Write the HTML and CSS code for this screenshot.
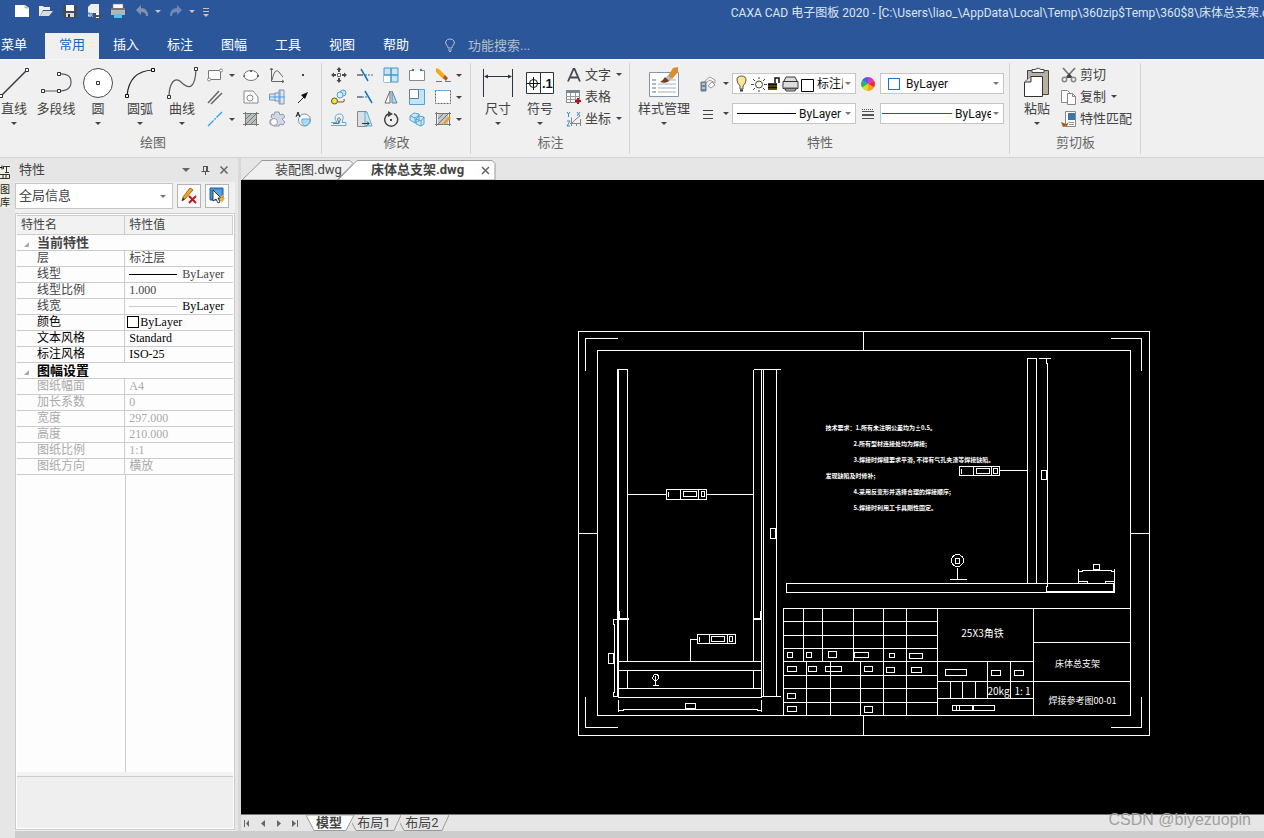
FILE: index.html
```html
<!DOCTYPE html>
<html lang="zh-CN">
<head>
<meta charset="utf-8">
<title>CAXA CAD 电子图板 2020</title>
<link rel="stylesheet" href="styles.css">
</head>
<body>
<header class="titlebar">
  <div class="title-row">
    <div class="qat">
      <button class="qat-btn" aria-label="新建"><svg viewBox="0 0 16 16"><path d="M1 2h10l4 3v9H1z" fill="#fff"/><path d="M11 2v3h4" fill="#ccd" stroke="#999" stroke-width=".6"/></svg></button>
      <button class="qat-btn" aria-label="打开"><svg viewBox="0 0 16 16"><path d="M1 3h4l1 1h6v3H5l-3 6H1z" fill="#eee"/><path d="M5 8h10l-4 5H2z" fill="#ddd"/></svg></button>
      <button class="qat-btn" aria-label="保存"><svg viewBox="0 0 16 16"><path d="M1 2h14v13H2l-1-1z" fill="#444b57"/><path d="M4 2h8v6H4z" fill="#fff"/><path d="M4 10h8v4H4z" fill="#ddd"/><path d="M6 11h2v3H6z" fill="#333"/></svg></button>
      <button class="qat-btn" aria-label="另存为"><svg viewBox="0 0 16 16"><path d="M5 1h8v9H2V4z" fill="#eee"/><path d="M2 12h5" stroke="#eee" stroke-width="3"/><path d="M3 9v3h3M5 10l2 2-2 2" stroke="#2786c9" fill="none"/><path d="M8 10h7v6H8z" fill="#4b505a"/><path d="M10 10h3v2h-3zM10 14h3v1h-3z" fill="#fff"/></svg></button>
      <button class="qat-btn" aria-label="打印"><svg viewBox="0 0 16 16"><path d="M3 1h10v5H3z" fill="#fff" stroke="#777" stroke-width=".6"/><path d="M1 5h14v7H1z" fill="#b5b5b5"/><path d="M1 5h14v2H1z" fill="#777"/><path d="M4 11h8v4H4z" fill="#4dc6ee"/></svg></button>
      <button class="qat-btn" aria-label="撤销"><svg viewBox="0 0 16 16"><path d="M7 2v3q7 0 7 8h-2q0-4-5-4v3L2 7z" fill="#8391ad"/></svg></button>
      <span class="caret caret-light"></span>
      <button class="qat-btn" aria-label="重做"><svg viewBox="0 0 16 16"><path d="M9 2v3q-7 0-7 8h2q0-4 5-4v3l5-5z" fill="#6f88b5"/></svg></button>
      <span class="caret caret-light"></span>
      <button class="qat-btn qat-more" aria-label="自定义"><svg viewBox="0 0 16 16"><path d="M5 5.500h6M5 8.500h6" stroke="#c4c4c4"/><path d="M5 11h6l-3 3z" fill="#c4c4c4"/></svg></button>
    </div>
    <h1 class="title">CAXA CAD 电子图板 2020 - [C:\Users\liao_\AppData\Local\Temp\360zip$Temp\360$8\床体总支架.dwg]</h1>
  </div>
  <nav class="tabs">
    <button class="tab tab-first">菜单</button>
    <button class="tab tab-active">常用</button>
    <button class="tab">插入</button>
    <button class="tab">标注</button>
    <button class="tab">图幅</button>
    <button class="tab">工具</button>
    <button class="tab">视图</button>
    <button class="tab">帮助</button>
    <label class="search">
      <svg viewBox="0 0 12 14" class="bulb"><path d="M4 10Q4 8 2.500 7 1 5 2 3 3 1 6 1t4 2q1 2-.5 4Q8 8 8 10zM4 12h4M5 13.500h2" fill="none" stroke="#b4bfd0"/></svg>
      <input type="text" placeholder="功能搜索..." aria-label="功能搜索">
    </label>
  </nav>
</header>

<section class="ribbon">
  <div class="group">
    <div class="group-body group-draw">
      <button class="big"><svg viewBox="0 0 32 32"><path d="M3 29L28 4" stroke="#3b3f47" stroke-width="1.600"/><path d="M1.500 27.500h3v3h-3zM27.500 1.500h3v3h-3z" fill="#fff" stroke="#333"/></svg><span>直线</span><i class="caret"></i></button>
      <button class="big"><svg viewBox="0 0 32 32"><path d="M3 24h16q12 0 12-9t-12-8" fill="none" stroke="#555b66" stroke-width="1.200"/><path d="M1.500 22.500h3v3h-3zM17.500 22.500h3v3h-3zM17.500 5.500h3v3h-3z" fill="#fff" stroke="#333"/></svg><span>多段线</span></button>
      <button class="big"><svg viewBox="0 0 32 32"><circle cx="16" cy="16" r="14.500" fill="#fff" stroke="#444a56"/><path d="M14.500 14.500h3v3h-3z" fill="#fff" stroke="#333"/></svg><span>圆</span><i class="caret"></i></button>
      <button class="big"><svg viewBox="0 0 32 32"><path d="M3 29Q5 4 29 3" fill="none" stroke="#222" stroke-width="1.200"/><path d="M1.500 27.500h3v3h-3zM27.500 1.500h3v3h-3z" fill="#fff" stroke="#111"/></svg><span>圆弧</span><i class="caret"></i></button>
      <button class="big"><svg viewBox="0 0 32 32"><path d="M3 30C3 16 9 9 15 15s14 10 15-13" fill="none" stroke="#555b66" stroke-width="1.200"/><path d="M1.500 28.500h3v3h-3zM28.500 .5h3v3h-3z" fill="#fff" stroke="#333"/></svg><span>曲线</span><i class="caret"></i></button>
      <div class="icons icons-draw">
        <button class="mini" aria-label="矩形"><svg viewBox="0 0 16 16"><path d="M1.500 3.500h12v9h-12z" fill="#fff" stroke="#777"/><circle cx="2" cy="12.500" r="1.500" fill="#fff" stroke="#888"/><circle cx="14" cy="3.500" r="1.500" fill="#fff" stroke="#888"/></svg><i class="caret"></i></button>
        <button class="mini" aria-label="椭圆"><svg viewBox="0 0 16 16"><ellipse cx="8" cy="8.500" rx="7" ry="5" fill="#fff" stroke="#777"/><path d="M7 3h2v2H7zM1 8h1v2H0zM14 8h2v2h-2z" fill="#666"/></svg></button>
        <button class="mini" aria-label="公式曲线"><svg viewBox="0 0 16 16"><path d="M2.500 1v13.500H15M3 13Q6 0 10 5q3 4 4 5M1 3l1.500-2L4 3M13 13l2 1.500L13 16" fill="none" stroke="#666"/></svg></button>
        <button class="mini" aria-label="点"><svg viewBox="0 0 16 16"><path d="M7 7h2v2H7z" fill="#444"/></svg></button>
        <button class="mini" aria-label="平行线"><svg viewBox="0 0 16 16"><path d="M1 14L12 2M4 15L15 4" stroke="#666" stroke-width="1.500"/></svg></button>
        <button class="mini" aria-label="轮廓"><svg viewBox="0 0 16 16"><path d="M1 2h9l5 6v6H1z" fill="#fff" stroke="#888"/><circle cx="7" cy="9" r="3" fill="none" stroke="#888"/></svg></button>
        <button class="mini" aria-label="孔/轴"><svg viewBox="0 0 16 16"><path d="M.5 5H6V4h4V1h5v14h-5v-3H6v-1H.5z" fill="#d9e6f5" stroke="#7e97b5"/><path d="M6 4v8M10 4v8M11 1v14" stroke="#7e97b5"/><path d="M0 8h16" stroke="#3aa2f0"/></svg></button>
        <button class="mini" aria-label="箭头"><svg viewBox="0 0 16 16"><path d="M3 14l7-7" stroke="#222"/><path d="M13 3l-3 7-4-4z" fill="#111"/></svg></button>
        <button class="mini" aria-label="中心线"><svg viewBox="0 0 16 16"><path d="M1 15L15 1" stroke="#25a2e8" stroke-width="1.300" stroke-dasharray="8 1 2 1"/></svg><i class="caret"></i></button>
        <button class="mini" aria-label="填充"><svg viewBox="0 0 16 16"><path d="M3 3h10v10H3z" fill="#b9c0c0"/><path d="M2.500 1v14M13.500 1v14M0 2.500h16M0 13.500h16M3 8l5-5M3 13L13 3M8 13l5-5" fill="none" stroke="#777"/></svg></button>
        <button class="mini" aria-label="齿轮"><svg viewBox="0 0 16 16"><path d="M3 3l2 1 1-3h4l1 3 3-1 2 3-3 2 3 3-2 3-3-1-1 2H5l-4-2V9l3-1-2-2z" fill="#d2d8e5" stroke="#929bac"/><circle cx="5" cy="11" r="3.500" fill="#fff" stroke="#929bac"/></svg></button>
        <button class="mini" aria-label="局部放大"><svg viewBox="0 0 16 16"><circle cx="9.500" cy="9" r="6" fill="#f7fbff" stroke="#8092a0"/><path d="M7 8h8q0 6-5 7-4-2-3-7z" fill="#a6dcf8" stroke="#6da6c8"/><path d="M1 6l2-5 2 5M2 4h2" fill="none" stroke="#222"/></svg></button>
      </div>
    </div>
    <div class="group-name group-name-draw">绘图</div>
  </div>

  <div class="group">
    <div class="group-body">
      <div class="icons icons-modify">
        <button class="mini" aria-label="平移"><svg viewBox="0 0 16 16"><path d="M6.500 6.500h3v3h-3z" fill="#fff" stroke="#666"/><path d="M8 0l2.500 3h-5zM8 16l2.500-3h-5zM0 8l3-2.500v5zM16 8l-3-2.500v5zM7 3h2v2H7zM7 11h2v2H7zM3 7h2v2H3zM11 7h2v2h-2z" fill="#4a4a4a"/></svg></button>
        <button class="mini" aria-label="裁剪"><svg viewBox="0 0 16 16"><path d="M0 8h6" stroke="#666" stroke-width="1.500"/><path d="M4 2l7 12" stroke="#1976c8" stroke-width="1.500"/><path d="M8 8h8" stroke="#1976c8" stroke-dasharray="2 1"/></svg></button>
        <button class="mini" aria-label="阵列"><svg viewBox="0 0 16 16"><path d="M1 1h14v14H1z" fill="#c4e8fb" stroke="#4a94c4"/><path d="M1 8h7v7H1z" fill="#fff"/><path d="M1 8h14M8 1v14" stroke="#4a94c4" stroke-width="1.500"/></svg></button>
        <button class="mini" aria-label="打断"><svg viewBox="0 0 16 16"><path d="M3 3.500H.5v10h15v-10H13" fill="#fff" stroke="#888"/><path d="M3 2h2v2H3zM11 2h2v2h-2z" fill="#1a7fd0"/></svg></button>
        <button class="mini" aria-label="删除"><svg viewBox="0 0 16 16"><path d="M1 14.500h6M10 14.500h6" stroke="#777"/><path d="M1 1l3 1 7 7-3 3-7-7z" fill="#f5a91c"/><path d="M10 8l3 3-2 3-3-3z" fill="#aa5634"/></svg></button>
        <i class="caret"></i>
        <button class="mini" aria-label="复制"><svg viewBox="0 0 16 16"><circle cx="3.500" cy="12" r="3" fill="#f8e71c" stroke="#555"/><circle cx="12" cy="4" r="3" fill="#bfe4fa" stroke="#5aa0cc"/><circle cx="9" cy="6" r="3" fill="#d6effc" stroke="#5aa0cc"/><path d="M7 13h5q2 0 1-3" fill="none" stroke="#a33"/></svg></button>
        <button class="mini" aria-label="延伸"><svg viewBox="0 0 16 16"><path d="M0 8h5" stroke="#666" stroke-width="1.500"/><path d="M8 2l7 12" stroke="#1976c8" stroke-width="1.500"/><path d="M5 8h7" stroke="#1976c8" stroke-dasharray="2 1"/></svg></button>
        <button class="mini" aria-label="镜像"><svg viewBox="0 0 16 16"><path d="M7 2v12H2z" fill="#fff" stroke="#666"/><path d="M9 2v12h5z" fill="#a9d8f3" stroke="#5a8ca8"/></svg></button>
        <button class="mini" aria-label="缩放"><svg viewBox="0 0 16 16"><path d="M.5 .5h15v15H.5z" fill="#bfe6fb" stroke="#5aa0cc"/><path d="M.5 .5h9v9h-9z" fill="#fff" stroke="#5f7f94"/></svg></button>
        <button class="mini" aria-label="拉伸"><svg viewBox="0 0 16 16"><path d="M.5 1.500h15v13H.5z" fill="#fff" stroke="#666" stroke-dasharray="2 1"/><path d="M0 1.500h16" stroke="#49a4e0" stroke-dasharray="2 1"/></svg></button>
        <i class="caret"></i>
        <button class="mini" aria-label="等距线"><svg viewBox="0 0 16 16"><path d="M0 14.500h15V12M0 11.500h6L4 8q0-5 4.500-5T12 8l-1 3.500h4" fill="none" stroke="#68a9cc"/><path d="M2 12.500h6L6.500 8q1-3 3 0L8 12" fill="none" stroke="#577"/></svg></button>
        <button class="mini" aria-label="拉伸面"><svg viewBox="0 0 16 16"><path d="M.5 .5h9v15h-9z" fill="#dcdfe2" stroke="#888"/><path d="M10 1l5 14H8V1z" fill="#c0e6fa" stroke="#68a9cc"/><path d="M5 12.500h7l-2-2M12 12.500l-2 2" stroke="#333" fill="none"/></svg></button>
        <button class="mini" aria-label="旋转"><svg viewBox="0 0 16 16"><path d="M5 3a6.500 6.500 0 1 0 6-.2" fill="none" stroke="#444" stroke-width="1.500"/><path d="M5 0l5 3-5 3z" fill="#444"/><path d="M7 8h2v2H7z" fill="#444"/></svg></button>
        <button class="mini" aria-label="分解"><svg viewBox="0 0 16 16"><path d="M1 5l4-3 5 1v7l-4 2-5-3zM7 8l3-3 5 1v7l-3 2-5-2zM1 5l5 2v5M7 8l5 2v5M6 7l4-3M12 10l3-4" fill="#c8e9fa" stroke="#58a3cc"/></svg></button>
        <button class="mini" aria-label="编辑填充"><svg viewBox="0 0 16 16"><path d="M3 3h10v10H3z" fill="#c2c6c8"/><path d="M1.500 1v14M14.500 1v14M0 2.500h16M0 13.500h16M3 8l5-5M3 13L13 3" fill="none" stroke="#777"/><path d="M14 5l2 2-6 6-2 1 1-3z" fill="#ee9f22"/></svg></button>
        <i class="caret"></i>
      </div>
    </div>
    <div class="group-name">修改</div>
  </div>

  <div class="group">
    <div class="group-body group-dim">
      <button class="big"><svg viewBox="0 0 32 32"><path d="M1.500 2v28M30.500 2v28" stroke="#2c3442"/><path d="M3 9.500h26" stroke="#2c3442"/><path d="M2 9.500l4-2v4zM30 9.500l-4-2v4z" fill="#2c3442"/></svg><span>尺寸</span><i class="caret"></i></button>
      <button class="big"><svg viewBox="0 0 32 32"><path d="M2.500 5.500h27v21h-27zM16.500 5v22" fill="#fff" stroke="#2c3442"/><circle cx="9.500" cy="16.500" r="4" fill="none" stroke="#111"/><path d="M9.500 10v13M3 16.500h13" stroke="#111"/><text x="18" y="21" class="sym">.1</text></svg><span>符号</span><i class="caret"></i></button>
      <div class="list">
        <button class="row"><svg viewBox="0 0 16 16"><path d="M2 14.500L7.500 2h1L14 14.500M4.500 10.500h7" fill="none" stroke="#444a54" stroke-width="1.800"/></svg>文字<i class="caret"></i></button>
        <button class="row"><svg viewBox="0 0 16 16"><path d="M.5 1.500h13v12H.5z" fill="#fff" stroke="#888"/><path d="M0 1h14v3H0z" fill="#7c8796"/><path d="M0 7.500h14M0 10.500h14M4.500 4v10M9.500 4v10" stroke="#999"/><path d="M12 9v6M9 12h6" stroke="#b00f1d" stroke-width="2"/></svg>表格</button>
        <button class="row"><svg viewBox="0 0 16 16"><path d="M5.500 15V6.500M4 12.500h11M6 12l4-4 4-3M10.500 12v3M14.500 8v7" fill="none" stroke="#888"/><path d="M1 1l1.500 2L4 1M2.500 3v3M11 1l3 4M14 1l-3 4M1 10h3l-3 5h3" fill="none" stroke="#3b8bcb"/></svg>坐标<i class="caret"></i></button>
      </div>
    </div>
    <div class="group-name">标注</div>
  </div>

  <div class="group">
    <div class="group-body group-prop">
      <button class="big big-wide"><svg viewBox="0 0 32 32"><path d="M1.500 5.500h29v24h-29z" fill="#fff" stroke="#8394ad"/><path d="M4 13h4M4 17h4M4 21h4M4 25h4" stroke="#5f7191"/><path d="M10 17h18M10 21h18M10 25h18M22 13h6" stroke="#a4adc6"/><path d="M25 1l5-1v5l-6 7-4-3z" fill="#dc8b2d"/><path d="M20 8l4 4-4 3-3-3z" fill="#b7b7b7"/><path d="M17 10l4 4q-3 3-9 1 3-1 5-5z" fill="#6e3c16"/></svg><span>样式管理</span><i class="caret"></i></button>
      <div class="prop-grid">
        <button class="mini mini-caret" aria-label="图层"><svg viewBox="0 0 16 16"><path d="M5 5l5-4 5 3v3l-5-3-5 3zM8 10l4-4 3 3-4 3z" fill="#fff" stroke="#999"/><path d="M1 6h5v9H1z" fill="#5f8db5" stroke="#777"/><path d="M2 8h3M2 12h3" stroke="#fff"/></svg><i class="caret"></i></button>
        <div class="combo">
          <svg viewBox="0 0 82 18" class="layer-icons"><path d="M7 11Q4 8 4 5q0-4 4.500-4T13 5q0 3-3 6v3H7z" fill="#fbe598" stroke="#554"/><path d="M7 15.500h3" stroke="#333" stroke-width="2"/><circle cx="26" cy="9.500" r="3.500" fill="#fdfbe8" stroke="#444"/><path d="M26 2v2M26 15v2M18 9.500h3M31 9.500h3M20 4l2 2M30 13l2 2M20 15l2-2M30 6l2-2" stroke="#444"/><path d="M35 8h9v7h-9z" fill="#665800"/><path d="M35 9.500h9M35 12.500h9M42 8V3h4v5" stroke="#111" stroke-width="1.500" fill="none"/><path d="M51 6l2-4h9l2 4M50 6.500h15v7H50zM52 13l1 3h9l1-3" fill="#ddd" stroke="#333"/><path d="M51 13.500h13" stroke="#555" stroke-width="2"/><path d="M68.500 4.500h12v12h-12z" fill="#fff" stroke="#000"/></svg>
          <select aria-label="图层"><option>标注层</option></select><i class="caret"></i>
        </div>
        <svg viewBox="0 0 16 16" class="prop-icon"><path d="M8 8V1a7 7 0 0 1 6 3.500z" fill="#e331c8"/><path d="M8 8l6-3.500a7 7 0 0 1 0 7z" fill="#ef2b2c"/><path d="M8 8l6 3.500A7 7 0 0 1 8 15z" fill="#f6a21b"/><path d="M8 8v7a7 7 0 0 1-6-3.500z" fill="#d6de28"/><path d="M8 8l-6 3.500a7 7 0 0 1 0-7z" fill="#2fb457"/><path d="M8 8L2 4.500A7 7 0 0 1 8 1z" fill="#4264e8"/></svg>
        <div class="combo combo-color"><span class="swatch"></span><select aria-label="颜色"><option>ByLayer</option></select><i class="caret"></i></div>
        <button class="mini mini-caret" aria-label="线型"><svg viewBox="0 0 16 16"><path d="M3 4.500h10M3 8.500h10M3 12.500h10" stroke="#444"/></svg><i class="caret"></i></button>
        <div class="combo combo-line"><span class="line"></span><select aria-label="线型选择"><option>ByLayer</option></select><i class="caret"></i></div>
        <svg viewBox="0 0 16 16" class="prop-icon"><path d="M2 3.500h12" stroke="#555" stroke-dasharray="1 1"/><path d="M2 5.500h12M2 12.500h12" stroke="#555"/><path d="M2 9h12" stroke="#555" stroke-width="2"/></svg>
        <div class="combo combo-width"><span class="line line-red"></span><select aria-label="线宽选择"><option>ByLayer</option></select><i class="caret"></i></div>
      </div>
    </div>
    <div class="group-name">特性</div>
  </div>

  <div class="group">
    <div class="group-body group-clip">
      <button class="big"><svg viewBox="0 0 32 32"><path d="M6.500 3.500h21v24h-21z" fill="#b9b0a4" stroke="#444"/><path d="M11 2.500h3q3-3 6 0h3v3H11z" fill="#fff" stroke="#444"/><path d="M10 9.500h11.500v20h-18V15z" fill="#fff" stroke="#333"/><path d="M10 9v6H4" fill="#ddd" stroke="#333"/></svg><span>粘贴</span><i class="caret"></i></button>
      <div class="list">
        <button class="row"><svg viewBox="0 0 16 16"><path d="M2 1l10 11M14 1L4 12" stroke="#777" stroke-width="1.800"/><path d="M8 6l4 5H5z" fill="#444"/><circle cx="3.500" cy="12.500" r="2.200" fill="#eee" stroke="#888" stroke-width="1.500"/><circle cx="12.500" cy="12.500" r="2.200" fill="#eee" stroke="#888" stroke-width="1.500"/></svg>剪切</button>
        <button class="row"><svg viewBox="0 0 16 16"><path d="M.5 1.500h6l3 3v9h-9z" fill="#fff" stroke="#888"/><path d="M6.500 4.500h5l3 3v8h-8z" fill="#fff" stroke="#888"/><path d="M11.500 4.500v3h3" fill="none" stroke="#888"/></svg>复制<i class="caret"></i></button>
        <button class="row"><svg viewBox="0 0 16 16"><path d="M4.500 .5h10v15h-10z" fill="#fff" stroke="#888"/><path d="M7 2h7v7H7z" fill="#3c77ac"/><path d="M8 11.500h5M8 13.500h5" stroke="#999"/><path d="M0 11l5 2 3-2-2 4-4 1z" fill="#a85c1c"/></svg>特性匹配</button>
      </div>
    </div>
    <div class="group-name">剪切板</div>
  </div>
</section>

<main class="workspace">
  <aside class="dock">
    <button class="dock-tab">
      <svg viewBox="0 0 10 14"><path d="M0 2.500h2M2 .5v4" stroke="#111"/><path d="M3 1.500h7M6.500 1v6M5 7.500h4M3.500 1v3" stroke="#333" fill="none"/><path d="M0 9.500h9.500v4H0M3 10v3M6 10v3" stroke="#333" fill="none"/></svg>
      <span>图</span><span>库</span>
    </button>
  </aside>
  <section class="panel">
    <header class="panel-head">
      <h2>特性</h2>
      <button aria-label="菜单"><svg viewBox="0 0 10 10"><path d="M1 3h8L5 7z" fill="#666"/></svg></button>
      <button aria-label="固定"><svg viewBox="0 0 10 10"><path d="M3.500 1v5M7.500 1v5M3 1.500h4M1.500 6.500h8M5.500 6v4M6.500 1v5" fill="none" stroke="#555"/></svg></button>
      <button aria-label="关闭"><svg viewBox="0 0 10 10"><path d="M1.500 1.500l7 7M8.500 1.500l-7 7" stroke="#666" stroke-width="1.500"/></svg></button>
    </header>
    <div class="panel-tools">
      <div class="combo combo-scope"><select aria-label="选择范围"><option>全局信息</option></select><i class="caret"></i></div>
      <button class="tool" aria-label="清除选择"><svg viewBox="0 0 18 18"><path d="M10 1l3 2-8 9-3 2 1-4z" fill="#f4a61d" stroke="#7d5514" stroke-width=".8"/><path d="M2 14l1-3 2 1z" fill="#222"/><path d="M9 9l7 7M16 9l-7 7" stroke="#c4161c" stroke-width="2"/></svg></button>
      <button class="tool" aria-label="快速选择"><svg viewBox="0 0 18 18"><path d="M2 1h13v12H2z" fill="#3f8fd6" stroke="#2560a0"/><path d="M4 3h9v8H4z" fill="#5ba4e0"/><path d="M5 3v11l3-2 2 4 2-1-2-4h3z" fill="#fff" stroke="#111" stroke-width=".8"/><path d="M14 8l-3 5h3l-1 4 4-6h-3l2-3z" fill="#f6b21b"/></svg></button>
    </div>
    <div class="sheet">
      <table class="props">
        <thead><tr><th>特性名</th><th>特性值</th></tr></thead>
        <tbody>
          <tr class="cat"><th colspan="2"><i class="fold"></i>当前特性</th></tr>
          <tr><th>层</th><td>标注层</td></tr>
          <tr><th>线型</th><td><div class="sample"><span class="rule"></span>ByLayer</div></td></tr>
          <tr><th>线型比例</th><td>1.000</td></tr>
          <tr><th>线宽</th><td><div class="sample dark"><span class="rule rule-thin"></span>ByLayer</div></td></tr>
          <tr class="dark"><th>颜色</th><td><span class="box"></span>ByLayer</td></tr>
          <tr class="dark"><th>文本风格</th><td>Standard</td></tr>
          <tr class="dark"><th>标注风格</th><td>ISO-25</td></tr>
          <tr class="cat dark"><th colspan="2"><i class="fold"></i>图幅设置</th></tr>
          <tr class="off"><th>图纸幅面</th><td>A4</td></tr>
          <tr class="off"><th>加长系数</th><td>0</td></tr>
          <tr class="off"><th>宽度</th><td>297.000</td></tr>
          <tr class="off"><th>高度</th><td>210.000</td></tr>
          <tr class="off"><th>图纸比例</th><td>1:1</td></tr>
          <tr class="off"><th>图纸方向</th><td>横放</td></tr>
        </tbody>
      </table>
      <div class="sheet-rest"></div>
      <div class="sheet-help"></div>
    </div>
  </section>
  <div class="splitter"></div>
  <section class="document">
    <nav class="doc-tabs">
      <button class="doc-tab"><svg viewBox="0 0 113 20"><path d="M1 20L21 .5h88l3 3L96 20z" fill="#f0f0f0" stroke="#999"/></svg><span>装配图.dwg</span></button>
      <button class="doc-tab doc-tab-on"><svg viewBox="0 0 160 20"><path d="M1 20L20 .5h135l3 3V20z" fill="#fff" stroke="#999"/><path d="M145 7l7 7M152 7l-7 7" stroke="#666" stroke-width="1.500"/></svg><span>床体总支架.dwg</span></button>
    </nav>
    <div class="canvas">
      <svg class="drawing" role="img" aria-label="床体总支架">
        <g transform="translate(-240.500 -179.500)">
          <path d="M578 331H1149V735H578ZM597 350H1130V715H597ZM863 331V350M863 715V735M578 533H597M1130 533H1149"/>
          <path d="M617 338H585V370M1110 338H1141V370M585 696V727H617M1110 727H1141V696"/>
          <path d="M617 696V369H627V661M618 369V697M627 670V688M753 369H780M753 369V661M753 670V688M761 369V697M763 369V696M776 369V696M761 696H780"/>
          <path d="M618 661H761M618 670H761M618 688H761M618 697H761"/>
          <path d="M618 699V711M761 699V711M618 710H623V709H757V710H761M685 703H695V708H685Z"/>
          <path d="M617 618H628M617 619H628M619 610V619M752 618H761M752 619H761M760 610V619"/>
          <path d="M612 619H618M613 619V624H614V692H613V696M612 696H618M608 653H613V663H608ZM770 528H775V538H770Z"/>
          <path d="M666 489H706V499H666ZM668 491V496M680 489V499M698 489V499M683 491H696V496H683ZM701 491H704V496H701ZM627 494H666M706 494H753"/>
          <path d="M697 634H735V643H697ZM699 636V641M709 634V643M727 634V643M711 636H724V641H711ZM729 636H732V641H729ZM697 639H690V661"/>
          <path d="M653 675L654 674H657L658 676V678L656 680H654L652 678ZM655 675V685M652 685H658"/>
          <path d="M786 583H1113V592H786ZM1046 591H1114V583M1027 583V358H1036V583M1038 358H1050M1046 358V363H1047V586H1046V591M1041 470H1046V479H1041Z"/>
          <path d="M959 466H999V475H959ZM961 468V473M973 466V475M991 466V475M976 468H989V473H976ZM993 468H997V473H993ZM998 470H1027"/>
          <circle cx="957" cy="560" r="6"/>
          <path d="M955 558H959V563H955ZM957 567V579M949 579H966"/>
          <path d="M1078 568V583M1114 568V592M1078 571H1082V570H1111V571H1114M1093 564H1099V569H1093ZM1078 581H1087V583M1114 581H1105V583"/>
          <path d="M783 715V608H1130M937 608V715M783 621H937M783 635H937M783 648H937M783 661H1033M783 675H937M783 688H937M783 702H937"/>
          <path d="M803 608V661M822 608V661M853 608V661M883 608V715M906 608V715M806 661V715M830 661V715M860 661V715"/>
          <path d="M1033 608V715M937 681H1130M1033 642H1130M937 698H1033M987 661V698M1010 661V698M950 681V698M962 681V698M975 681V698"/>
          <path d="M787 652h5v5h-5zM806 652h5v5h-5zM828 651h8v6h-8zM854 652h14v5h-14zM889 653h5v4h-5zM909 653h13v5h-13z"/>
          <path d="M787 666h9v5h-9zM808 666h8v5h-8zM825 666h16v5h-16zM864 666h8v5h-8zM886 667h8v5h-8zM911 667h10v5h-10z"/>
          <path d="M787 693h8v5h-8zM787 706h9v5h-9zM864 706h8v6h-8zM945 669h21v6h-21zM991 670h9v5h-9zM1014 670h9v5h-9z"/>
          <path d="M952 705h42v5h-42zM956 705v5M959 705v5M972 705v5M973 705v5"/>
          <g class="note">
            <text x="825" y="429">技术要求：1.所有未注明公差均为±0.5。</text>
            <text x="853" y="445">2.所有型材连接处均为焊接;</text>
            <text x="853" y="461">3.焊接时焊缝要求平滑, 不得有气孔夹渣等焊接缺陷。</text>
            <text x="825" y="477">发现缺陷及时修补;</text>
            <text x="853" y="493">4.采用反变形并选择合理的焊接顺序;</text>
            <text x="853" y="509">5.焊接时利用工卡具刚性固定。</text>
          </g>
          <g class="label">
            <text x="982" y="636">25X3角铁</text>
            <text x="998" y="694">20kg</text>
            <text x="1022" y="694">1: 1</text>
          </g>
          <g class="label label-small">
            <text x="1077" y="666">床体总支架</text>
            <text x="1082" y="703">焊接参考图00-01</text>
          </g>
        </g>
      </svg>
    </div>
    <nav class="sheets">
      <button class="nav" aria-label="第一个"><svg viewBox="0 0 10 10"><path d="M2.500 2v7" stroke="#666"/><path d="M7 2v7L4 5.500z" fill="#666"/></svg></button>
      <button class="nav" aria-label="上一个"><svg viewBox="0 0 10 10"><path d="M7 2v7L3 5.500z" fill="#666"/></svg></button>
      <button class="nav" aria-label="下一个"><svg viewBox="0 0 10 10"><path d="M3 2v7l4-3.500z" fill="#666"/></svg></button>
      <button class="nav" aria-label="最后一个"><svg viewBox="0 0 10 10"><path d="M7.500 2v7" stroke="#666"/><path d="M2 2v7l4-3.500z" fill="#666"/></svg></button>
      <button class="sheet-tab sheet-tab-on"><svg viewBox="0 0 49 17"><path d="M0 0l8 15.500h32L48 0z" fill="#fff" stroke="#999"/></svg><span>模型</span></button>
      <button class="sheet-tab"><svg viewBox="0 0 49 17"><path d="M0 8l4 7.500h38L49 0" fill="none" stroke="#999"/></svg><span>布局1</span></button>
      <button class="sheet-tab"><svg viewBox="0 0 49 17"><path d="M0 8l4 7.500h38L49 0" fill="none" stroke="#999"/></svg><span>布局2</span></button>
    </nav>
  </section>
</main>
<footer class="status"></footer>
<div class="watermark">CSDN @biyezuopin</div>
</body>
</html>
```
FILE: styles.css
```css
* { box-sizing: border-box; }

body {
  margin: 0;
  height: 100vh;
  display: flex;
  flex-direction: column;
  overflow: hidden;
  position: relative;
  background: #e6e6e6;
  color: #444;
  font: 13px/18px Roboto, "Noto Sans CJK SC", sans-serif;
}

button, input, select {
  font: inherit;
  color: inherit;
  margin: 0;
  padding: 0;
  border: 0;
  background: none;
  border-radius: 0;
}

h1, h2 { margin: 0; font-size: 13px; font-weight: 400; }
svg { display: block; flex: none; }

.caret {
  flex: none;
  width: 6px;
  height: 3px;
  border: 3px solid transparent;
  border-top-color: #444;
  border-bottom: 0;
}
.caret-light { border-top-color: #c4c4c4; }

/* Title bar */
.titlebar { background: #2b579a; color: #fff; flex: none; }
.title-row {
  display: grid;
  grid-template-columns: 37fr 27fr;
  height: 33px;
  overflow: hidden;
}
.qat { display: flex; align-items: center; height: 22px; padding-left: 14px; }
.qat-btn { width: 16px; height: 16px; margin-right: 8px; }
.qat-btn:nth-of-type(n+6) { margin-right: 5px; }
.qat .caret { margin-right: 7px; }
.qat-btn.qat-more { margin-left: -4px; }
.title { white-space: nowrap; color: #dbe4f1; padding-top: 4px; font-size: 12px; min-width: 0; }

.tabs { display: flex; height: 26px; }
.tab { width: 54px; padding-bottom: 3px; }
.tab-first { width: 45px; text-align: left; padding-left: 1px; }
.tab-active { background: #f0f0f0; color: #1268c8; }
.search { display: flex; align-items: center; padding: 0 0 2px 21px; gap: 12px; }
.bulb { width: 12px; height: 14px; }
.search input { width: 100px; color: #fff; height: 20px; outline: 0; }
.search input::placeholder { color: #b4bfd0; opacity: 1; }

/* Ribbon */
.ribbon {
  display: flex;
  flex: none;
  background: #f0f0f0;
  border-top: 1px solid #fafafa;
  border-bottom: 1px solid #d2d2d2;
}
.group { position: relative; }
.group::after {
  content: "";
  position: absolute;
  right: 0;
  top: 3px;
  bottom: 3px;
  border-right: 1px solid #d2d2d2;
}
.group-body { display: flex; padding: 4px 6px 0 6px; }
.group-name { text-align: center; color: #666; height: 27px; line-height: 26px; }
.group-name-draw { padding-right: 16px; }
.group-draw { padding: 4px 7px 0 0; margin-left: -7px; }
.group-dim { padding-right: 8px; }
.group-clip { padding-right: 9px; }

.big {
  width: 42px;
  height: 66px;
  display: flex;
  flex-direction: column;
  align-items: center;
  padding-top: 3px;
  white-space: nowrap;
}
.big svg { width: 32px; height: 32px; }
.big span { line-height: 20px; }
.big .caret { margin-top: 3px; }
.big-wide { width: 56px; }
.sym { font: bold 13px "Liberation Sans", sans-serif; fill: #111; }

.icons { display: grid; grid-auto-rows: 22px; }
.icons-draw { grid-template-columns: 31px 26px 26px 26px; padding-left: 4px; margin-right: -1px; }
.icons-modify { grid-template-columns: repeat(5, 26px) 9px; margin-left: -2px; }
.icons .caret { align-self: center; }
.mini { display: flex; align-items: center; justify-content: center; gap: 6px; }
.mini svg, .row svg { width: 16px; height: 16px; }
.icons-draw .mini:nth-child(4n+1) { justify-content: flex-start; }

.list { display: flex; flex-direction: column; align-items: flex-start; padding-left: 3px; }
.group-dim .list { padding-left: 5px; }
.row { display: flex; align-items: center; height: 22px; gap: 3px; padding-bottom: 1px; white-space: nowrap; }
.row .caret { margin-left: 2px; }

.prop-grid {
  display: grid;
  grid-template-columns: 28px 124px 16px 124px;
  grid-auto-rows: 21px;
  row-gap: 9px;
  column-gap: 4px;
  padding: 9px 0 0 8px;
}
.mini-caret { justify-content: flex-start; gap: 7px; }
.prop-icon { width: 16px; height: 16px; align-self: center; }

.combo {
  display: flex;
  align-items: center;
  min-width: 0;
  background: #fff;
  border: 1px solid #c6c6c6;
  color: #111;
  font-size: 12px;
  padding-right: 4px;
}
.combo select {
  flex: 1;
  min-width: 0;
  height: 19px;
  appearance: none;
  outline: 0;
  overflow: hidden;
  text-overflow: clip;
}
.combo .caret { border-top-color: #777; margin-left: 2px; }
.layer-icons { width: 82px; height: 18px; margin-right: 2px; }
.swatch { width: 12px; height: 12px; border: 1px solid #1177d1; margin: 0 6px 0 7px; flex: none; }
.line { flex: none; width: 59px; height: 1px; background: #000; margin: 0 3px 0 4px; }
.line-red { width: 70px; background: #f00; margin-left: 1px; }

/* Workspace */
.workspace { flex: 1; display: flex; min-height: 0; }
.dock { flex: none; width: 15px; padding-top: 7px; }
.dock-tab {
  display: flex;
  flex-direction: column;
  width: 10px;
  color: #222;
  background: #efeee2;
  font: 10px/13px "Noto Sans CJK SC", sans-serif;
}
.dock-tab svg { width: 10px; height: 14px; margin-bottom: 3px; }
.dock-tab span { height: 13px; }

.panel { flex: none; width: 220px; display: flex; flex-direction: column; background: #f0f0f0; }
.panel-head { display: flex; align-items: center; height: 24px; padding: 0 6px 0 4px; gap: 9px; background: #e6e6e6; }
.panel-head h2 { flex: 1; padding-bottom: 1px; }
.panel-head button { width: 10px; height: 10px; }
.panel-tools { display: flex; align-items: center; gap: 4px; padding: 1px 6px 4px 0; }
.combo-scope { flex: 1; height: 26px; padding-left: 3px; color: #444; font-size: 13px; padding-right: 6px; }
.tool { width: 24px; height: 24px; border: 1px solid #b4b4b4; background: #fbfbfb; padding: 2px; }
.tool svg { width: 18px; height: 18px; }

.sheet {
  flex: 1;
  min-height: 0;
  display: flex;
  flex-direction: column;
  border: 1px solid #ccc;
  padding: 1px;
  background: #fff;
  margin-bottom: 1px;
}
.props {
  width: 100%;
  flex: none;
  table-layout: fixed;
  border-collapse: collapse;
  font: 12px/15px "Liberation Serif", "Noto Sans CJK SC", serif;
}
.props th, .props td {
  height: 16px;
  padding: 0 0 0 4px;
  text-align: left;
  font-weight: 400;
  border-bottom: 1px solid #ccc;
  background: #fdfdfd;
  white-space: nowrap;
}
.props th { padding-left: 20px; border-right: 1px solid #ccc; }
.props thead th { height: 19px; padding-left: 4px; background: #f2f2f2; border-top: 1px solid #ccc; }
.props .cat th { font-weight: 700; font-size: 13px; border-right: 0; padding-left: 7px; }
.dark { color: #000; }
.off { color: #aaa; }
.fold {
  display: inline-block;
  border-left: 5px solid transparent;
  border-bottom: 5px solid #aaa;
  margin-right: 8px;
}
.sample { display: flex; align-items: center; gap: 5px; }
.rule { width: 48px; height: 1px; background: #000; }
.rule-thin { background: #ccc; }
.box { display: inline-block; width: 12px; height: 12px; border: 1px solid #000; margin-left: -2px; margin-right: 1px; vertical-align: -2px; background: #fff; }
.sheet-rest { flex: 1; background: linear-gradient(#ccc, #ccc) 50% 0 / 1px 100% no-repeat #fdfdfd; }
.sheet-help { flex: none; height: 56px; background: #efefef; border-top: 4px solid #f2f2f2; box-shadow: inset 0 1px #ccc; }
.splitter { flex: none; width: 6px; border-right: 3px solid #d8d8d8; }

.document { flex: 1; min-width: 0; display: flex; flex-direction: column; }
.doc-tabs { display: flex; flex: none; height: 22px; padding-top: 2px; }
.doc-tab { position: relative; width: 113px; height: 20px; padding-left: 34px; text-align: left; white-space: nowrap; }
.doc-tab svg { position: absolute; inset: 0; height: 20px; }
.doc-tab span { position: relative; }
.doc-tab-on { width: 160px; margin-left: -17px; font-weight: 700; }
.canvas { flex: 1; min-height: 0; background: #000; }
.drawing { width: 100%; height: 100%; fill: none; stroke: #fff; stroke-width: 1px; shape-rendering: crispEdges; }
.drawing text { fill: #fff; stroke: none; }
.note { font: bold 6px "Noto Sans CJK SC", sans-serif; }
.label { font: 10px "Noto Sans CJK SC", sans-serif; text-anchor: middle; }
.label-small { font-size: 9px; }

.sheets { display: flex; flex: none; height: 17px; border-top: 1px solid #777; padding-left: 1px; }
.nav { width: 16px; padding-bottom: 1px; }
.nav svg { width: 10px; height: 10px; }
.sheet-tab { position: relative; width: 48px; line-height: 15px; padding: 0 4px 3px 0; white-space: nowrap; }
.sheet-tab svg { position: absolute; inset: 0; width: 49px; height: 17px; }
.sheet-tab span { position: relative; }
.sheet-tab-on { width: 46px; padding-right: 0; font-weight: 700; }

.status { flex: none; height: 7px; margin-left: 15px; background: #cdcdcd; }
.watermark {
  position: absolute;
  right: 13px;
  bottom: 8px;
  font: 16px/20px "Liberation Sans", sans-serif;
  color: #a0a0a0;
}
```
